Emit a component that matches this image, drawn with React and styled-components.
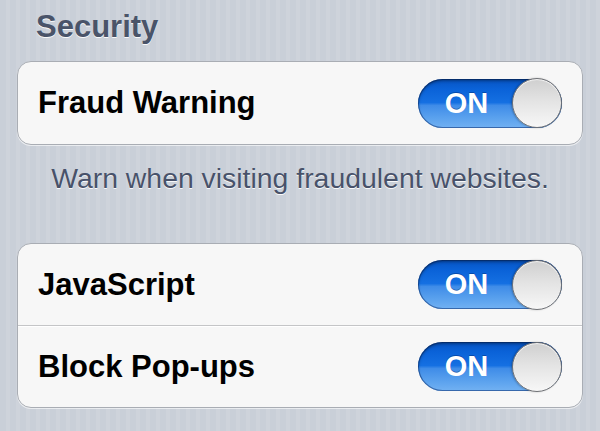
import React from "react";
import styled, { createGlobalStyle } from "styled-components";

const GlobalStyle = createGlobalStyle`
  html, body {
    margin: 0;
    padding: 0;
  }
  body {
    font-family: "Liberation Sans", Helvetica, Arial, sans-serif;
    -webkit-font-smoothing: antialiased;
  }
`;

const Page = styled.div`
  width: 600px;
  height: 431px;
  overflow: hidden;
  box-sizing: border-box;
  padding-top: 9px;
  background-color: #cbd1d9;
  background-image: repeating-linear-gradient(
    90deg,
    #c9cfd8 0px,
    #c9cfd8 6px,
    #ced3db 6px,
    #ced3db 10px
  );
`;

const SectionHeader = styled.div`
  height: 36px;
  line-height: 36px;
  padding-left: 36px;
  margin-bottom: 16px;
  font-size: 31px;
  font-weight: bold;
  color: #4a5469;
  text-shadow: 0 1px 0 rgba(255, 255, 255, 0.9);
`;

const Group = styled.div`
  margin: 0 17px;
  background: #f7f7f7;
  border: 1px solid #a9adb4;
  border-radius: 14px;
  box-shadow: 0 1px 0 rgba(255, 255, 255, 0.6);
`;

const Row = styled.div`
  display: flex;
  align-items: center;
  justify-content: space-between;
  height: ${(p) => p.$h || 82}px;
  padding: 0 20px 0 20px;
  border-top: ${(p) => (p.$divider ? "1px solid #c4c5c7" : "none")};
  box-shadow: ${(p) =>
    p.$divider ? "inset 0 1px 0 rgba(255, 255, 255, 0.9)" : "none"};
`;

const Label = styled.span`
  font-size: 31px;
  font-weight: bold;
  color: #000;
`;

const Footer = styled.div`
  margin-top: 16px;
  margin-bottom: 48px;
  height: 34px;
  line-height: 34px;
  text-align: center;
  font-size: 28.4px;
  color: #48526a;
  text-shadow: 0 1px 0 rgba(255, 255, 255, 0.9);
`;

const Track = styled.div`
  display: flex;
  align-items: center;
  width: 144px;
  height: 49px;
  box-sizing: border-box;
  border-radius: 25px;
  background: linear-gradient(
    180deg,
    #0653c2 0%,
    #0a62d8 20%,
    #1570e2 48%,
    #3f8ce8 54%,
    #5ba2ee 80%,
    #72b1f2 100%
  );
  box-shadow: inset 0 2px 3px rgba(0, 0, 0, 0.35),
    inset 0 0 0 1px rgba(10, 50, 120, 0.55);
`;

const SwitchText = styled.span`
  flex: 1;
  text-align: center;
  padding-left: 3px;
  font-size: 29px;
  font-weight: bold;
  color: #fff;
  text-shadow: 0 -1px 0 rgba(0, 40, 110, 0.45);
`;

const Knob = styled.div`
  width: 50px;
  height: 50px;
  box-sizing: border-box;
  border-radius: 50%;
  border: 1.5px solid #6f7175;
  background: linear-gradient(180deg, #cfcfcf 0%, #e3e3e3 45%, #f7f7f7 100%);
  box-shadow: inset 0 1px 1px rgba(255, 255, 255, 0.8),
    -1px 0 2px rgba(0, 0, 0, 0.25);
`;

const Switch = () => (
  <Track>
    <SwitchText>ON</SwitchText>
    <Knob />
  </Track>
);

const App = () => {
  return (
    <Page>
      <GlobalStyle />
      <SectionHeader>Security</SectionHeader>
      <Group>
        <Row>
          <Label>Fraud Warning</Label>
          <Switch />
        </Row>
      </Group>
      <Footer>Warn when visiting fraudulent websites.</Footer>
      <Group>
        <Row $h={81}>
          <Label>JavaScript</Label>
          <Switch />
        </Row>
        <Row $h={81} $divider>
          <Label>Block Pop-ups</Label>
          <Switch />
        </Row>
      </Group>
    </Page>
  );
};

export default App;
